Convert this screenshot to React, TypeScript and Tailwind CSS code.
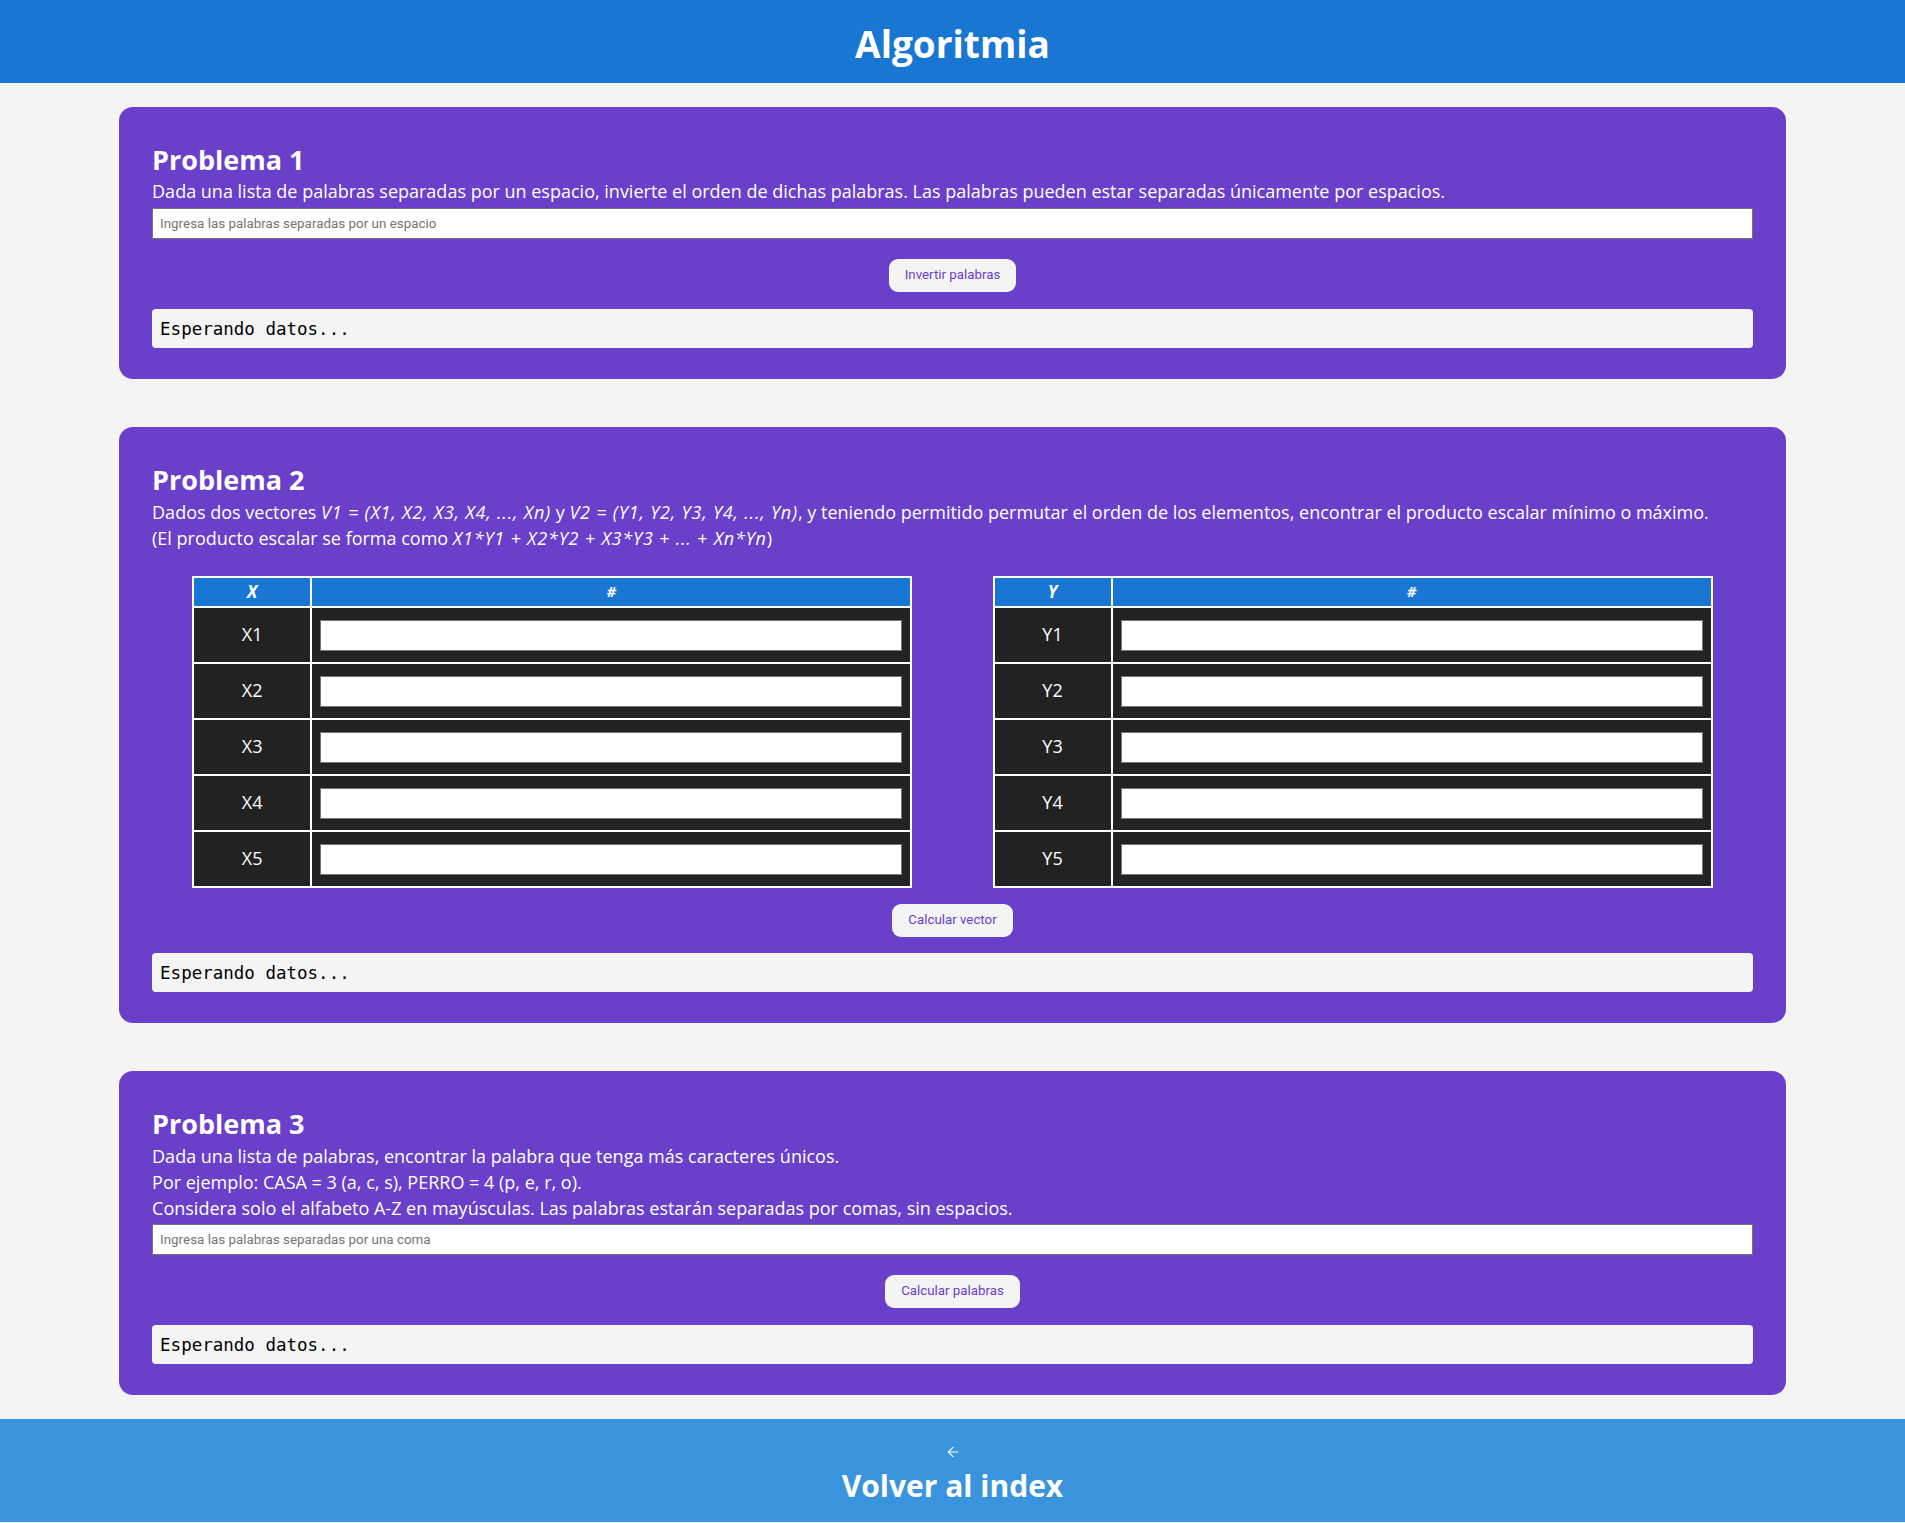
import { ArrowLeft } from "lucide-react";

const rows = [1, 2, 3, 4, 5];

const Output = () => (
  <div className="h-[39px] rounded-[4px] bg-[#f4f4f4] px-2 pt-[2px] flex items-center font-['DejaVu_Sans_Mono',monospace] text-[17.5px] text-black">
    Esperando datos...
  </div>
);

const Btn = ({ label }: { label: string }) => (
  <div className="flex justify-center">
    <button className="h-[33px] px-4 rounded-[9px] bg-[#f4f4f4] text-[#6a40cb] font-['Roboto',sans-serif] text-[13.3px]">
      {label}
    </button>
  </div>
);

const TextInput = ({ placeholder }: { placeholder: string }) => (
  <input
    type="text"
    placeholder={placeholder}
    className="mt-[3px] block w-full h-[31px] border border-[#767676] bg-white px-[7px] font-['Roboto',sans-serif] text-[13.4px] text-black placeholder:text-[#757575] outline-none"
  />
);

const Em = ({ children }: { children: React.ReactNode }) => (
  <i className="tracking-[0.8px]">{children}</i>
);

const Vector = ({ name }: { name: string }) => (
  <table className="w-[45%] border-separate border-spacing-0 border border-white">
    <thead>
      <tr>
        <th className="w-[118px] h-[30px] p-0 border border-white bg-[#1976d2] text-white italic font-bold text-[17px]">
          {name}
        </th>
        <th className="h-[30px] p-0 border border-white bg-[#1976d2] text-white italic font-bold text-[15px]">
          #
        </th>
      </tr>
    </thead>
    <tbody>
      {rows.map((n) => (
        <tr key={n}>
          <td className="border border-white bg-[#222222] text-center text-white text-[18px]">
            {name}
            {n}
          </td>
          <td className="border border-white bg-[#222222] px-2 pt-3 pb-[11px]">
            <input
              type="text"
              className="block w-full h-[31px] border border-[#767676] bg-white outline-none"
            />
          </td>
        </tr>
      ))}
    </tbody>
  </table>
);

const Card = ({ title, children }: { title: string; children: React.ReactNode }) => (
  <section className="rounded-[14px] bg-[#6a40cb] px-[33px] pt-[36px] pb-[31px] text-white">
    <h2 className="text-[27px] leading-[34px] font-bold">{title}</h2>
    {children}
  </section>
);

export default function App() {
  return (
    <div className="min-h-screen bg-[#f4f4f4] font-['Open_Sans',sans-serif]">
      <header className="h-[83px] bg-[#1976d2] flex items-center justify-center pt-1">
        <h1 className="text-white text-[37px] font-bold">Algoritmia</h1>
      </header>

      <main className="w-[87.5%] mx-auto py-6 flex flex-col gap-12">
        <Card title="Problema 1">
          <p className="mt-[2px] text-[18px] leading-[25.5px]">
            Dada una lista de palabras separadas por un espacio, invierte el orden de dichas palabras. Las palabras pueden estar separadas únicamente por espacios.
          </p>
          <TextInput placeholder="Ingresa las palabras separadas por un espacio" />
          <div className="mt-5 mb-[17px]">
            <Btn label="Invertir palabras" />
          </div>
          <Output />
        </Card>

        <Card title="Problema 2">
          <p className="mt-[2px] text-[18px] leading-[26px]">
            Dados dos vectores <Em>V1 = (X1, X2, X3, X4, ..., Xn)</Em> y <Em>V2 = (Y1, Y2, Y3, Y4, ..., Yn)</Em>, y teniendo permitido permutar el orden de los elementos, encontrar el producto escalar mínimo o máximo.
            <br />
            (El producto escalar se forma como <Em>X1*Y1 + X2*Y2 + X3*Y3 + ... + Xn*Yn</Em>)
          </p>
          <div className="mt-[25px] flex justify-around">
            <Vector name="X" />
            <Vector name="Y" />
          </div>
          <div className="my-4">
            <Btn label="Calcular vector" />
          </div>
          <Output />
        </Card>

        <Card title="Problema 3">
          <p className="mt-[2px] text-[18px] leading-[26px]">
            Dada una lista de palabras, encontrar la palabra que tenga más caracteres únicos.
            <br />
            Por ejemplo: CASA = 3 (a, c, s), PERRO = 4 (p, e, r, o).
            <br />
            Considera solo el alfabeto A-Z en mayúsculas. Las palabras estarán separadas por comas, sin espacios.
          </p>
          <TextInput placeholder="Ingresa las palabras separadas por una coma" />
          <div className="mt-5 mb-[17px]">
            <Btn label="Calcular palabras" />
          </div>
          <Output />
        </Card>
      </main>

      <footer className="h-[103px] bg-[#3a93dd] flex flex-col items-center pt-[25px] text-white">
        <ArrowLeft size={16} strokeWidth={1.6} />
        <span className="mt-[7px] text-[30px] leading-[38px] font-bold">Volver al index</span>
      </footer>
    </div>
  );
}
